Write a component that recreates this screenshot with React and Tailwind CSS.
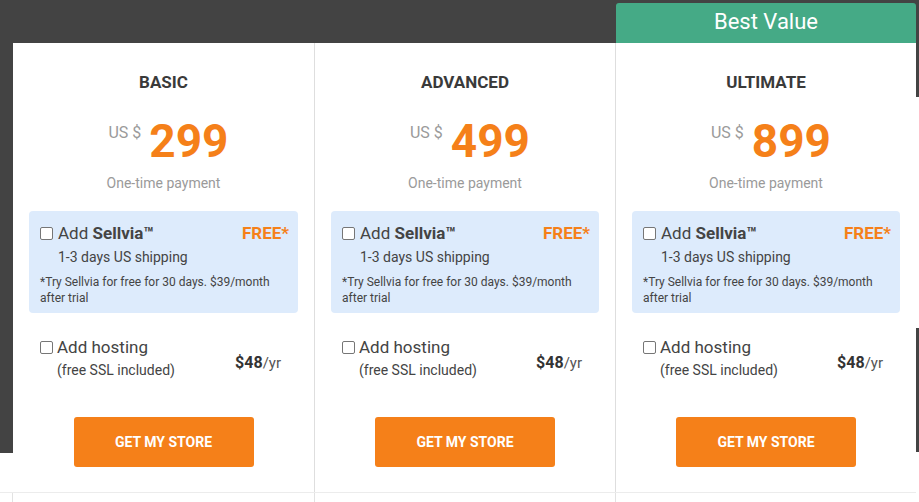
import React from "react";

const plans = [
  { name: "BASIC", price: "299" },
  { name: "ADVANCED", price: "499" },
  { name: "ULTIMATE", price: "899" },
];

function Checkbox() {
  return (
    <span className="inline-block w-[13px] h-[13px] shrink-0 rounded-[2px] border border-[#767676] bg-white" />
  );
}

function PlanCard({ plan, className }) {
  return (
    <div className={`flex flex-col items-center h-full px-[16px] ${className}`}>
      <div className="pt-[29px] text-[17px] leading-[20px] font-bold text-[#3a3a3a]">{plan.name}</div>
      <div className="mt-[22px] ml-[10px] flex items-start gap-[8px]">
        <span className="mt-[9px] text-[16px] leading-[20px] text-[#9a9a9a]">US $</span>
        <span className="text-[46px] leading-[54px] font-bold text-[#f58019]">{plan.price}</span>
      </div>
      <div className="mt-[5px] text-[14px] leading-[20px] text-[#9a9a9a]">One-time payment</div>

      <div className="mt-[18px] w-full h-[102px] rounded-[4px] bg-[#ddebfc] pl-[11px] pr-[9px] pt-[12px] text-[#444]">
        <div className="flex items-center justify-between">
          <div className="flex items-center gap-[5px] text-[17px] leading-[20px]">
            <Checkbox />
            <span>
              Add <span className="font-bold">Sellvia™</span>
            </span>
          </div>
          <span className="text-[17px] leading-[20px] font-bold text-[#f58019]">FREE*</span>
        </div>
        <div className="mt-[4px] pl-[18px] text-[14px] leading-[20px]">1-3 days US shipping</div>
        <div className="mt-[7px] pr-[4px] text-[12px] leading-[16px]">
          *Try Sellvia for free for 30 days. $39/month after trial
        </div>
      </div>

      <div className="mt-[23px] w-full flex justify-between pl-[11px] pr-[17px] text-[#444]">
        <div className="flex flex-col">
          <div className="flex items-center gap-[4px] text-[17px] leading-[22px]">
            <Checkbox />
            <span>Add hosting</span>
          </div>
          <div className="mt-[2px] pl-[17px] text-[14px] leading-[20px]">(free SSL included)</div>
        </div>
        <div className="mt-[17px] leading-[20px]">
          <span className="text-[16px] font-bold text-[#333]">$48</span>
          <span className="text-[15px] text-[#555]">/yr</span>
        </div>
      </div>

      <button className="mt-[37px] w-[180px] h-[50px] rounded-[3px] bg-[#f58019] text-white text-[14px] font-bold">
        GET MY STORE
      </button>
    </div>
  );
}

export default function App() {
  return (
    <div
      className="w-[919px] h-[502px] bg-white overflow-hidden flex"
      style={{ fontFamily: "Roboto, 'Liberation Sans', sans-serif" }}
    >
      <div className="w-[13px] flex flex-col">
        <div className="h-[453px] bg-[#434343]" />
        <div className="h-[40px] border-b border-[#ececec]" />
        <div className="flex-1 border-r border-[#e2e2e2]" />
      </div>

      <div className="w-[903px] flex flex-col">
        <div className="h-[43px] flex bg-[#434343]">
          <div className="w-[603px]" />
          <div className="mt-[3px] w-[300px] h-[40px] rounded-t-[3px] bg-[#45aa86] text-white text-[22px] leading-[38px] text-center">
            Best Value
          </div>
        </div>
        <div className="h-[450px] flex border-b border-[#ececec]">
          <PlanCard plan={plans[0]} className="w-[302px] border-r border-[#dedede]" />
          <PlanCard plan={plans[1]} className="w-[301px] border-r border-[#dedede]" />
          <PlanCard plan={plans[2]} className="w-[300px]" />
        </div>
        <div className="flex-1 flex">
          <div className="w-[302px] border-r border-[#e2e2e2]" />
          <div className="w-[301px] border-r border-[#e2e2e2]" />
          <div className="w-[300px]" />
        </div>
      </div>

      <div className="w-[3px] flex flex-col">
        <div className="h-[97px] bg-[#434343]" />
        <div className="h-[231px]" />
        <div className="h-[124px] bg-[#434343]" />
      </div>
    </div>
  );
}
